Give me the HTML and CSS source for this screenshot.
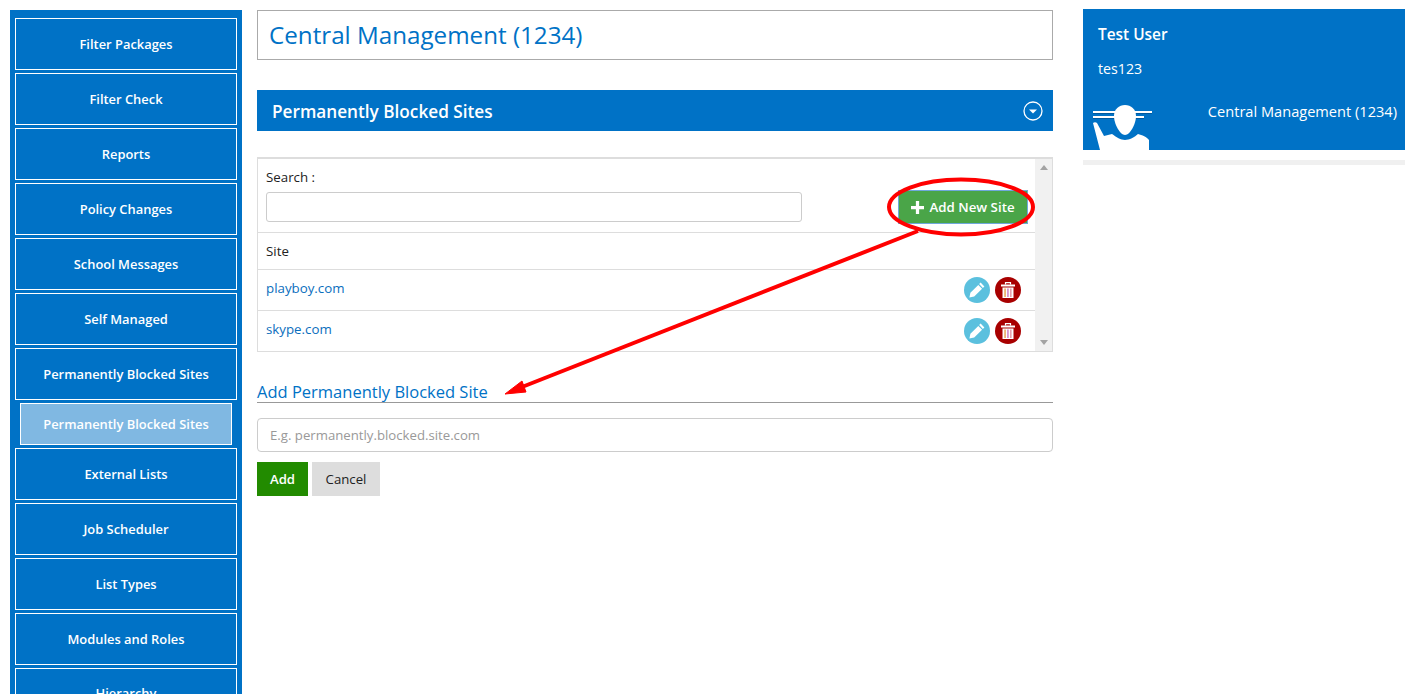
FILE: index.html
```html
<!DOCTYPE html>
<html lang="en">
<head>
    <meta charset="UTF-8">
    <meta name="viewport" content="width=device-width, initial-scale=1.0">
    <title>Permanently Blocked Sites</title>
    <link rel="stylesheet" href="styles.css">
</head>
<body>
    <div class="page">
        <nav class="sidebar">
            <a class="nav-item">Filter Packages</a>
            <a class="nav-item">Filter Check</a>
            <a class="nav-item">Reports</a>
            <a class="nav-item">Policy Changes</a>
            <a class="nav-item">School Messages</a>
            <a class="nav-item">Self Managed</a>
            <a class="nav-item">Permanently Blocked Sites</a>
            <a class="nav-sub">Permanently Blocked Sites</a>
            <a class="nav-item">External Lists</a>
            <a class="nav-item">Job Scheduler</a>
            <a class="nav-item">List Types</a>
            <a class="nav-item">Modules and Roles</a>
            <a class="nav-item nav-cut">Hierarchy</a>
        </nav>

        <main class="content">
            <h1 class="title-box">Central Management (1234)</h1>

            <div class="panel-head">
                <h2>Permanently Blocked Sites</h2>
                <svg class="collapse-icon" width="20" height="20" viewBox="0 0 20 20">
                    <circle cx="10" cy="10" r="9" fill="none" stroke="#fff" stroke-width="1.3"/>
                    <path d="M6 8.5h8l-4 4z" fill="#fff"/>
                </svg>
            </div>

            <div class="table-box">
                <div class="table-main">
                    <div class="search-row">
                        <div class="search-field">
                            <label for="search">Search :</label>
                            <input type="text" id="search">
                        </div>
                        <button class="btn-new">
                            <svg width="13" height="13" viewBox="0 0 12 12"><path d="M4.5 0h3v4.5H12v3H7.5V12h-3V7.5H0v-3h4.5z" fill="#fff"/></svg>
                            Add New Site
                        </button>
                    </div>
                    <div class="table-head">Site</div>
                    <div class="table-row">
                        <a class="site-link">playboy.com</a>
                        <div class="row-actions">
                            <span class="round-btn edit">
                                <svg width="18" height="18" viewBox="0 0 18 18"><path d="M12.6 1.6l3.8 3.8-1.5 1.5-3.8-3.8zM10.3 3.9l3.8 3.8-7.9 7.9-4.8 1 1-4.8z" fill="#fff"/></svg>
                            </span>
                            <span class="round-btn del">
                                <svg width="14" height="16" viewBox="0 0 14 16"><path d="M4.5 2.5V.7h5v1.8" fill="none" stroke="#fff" stroke-width="1.2"/><path d="M0 2.5h14v2H0z" fill="#fff"/><path d="M1.5 5.5h11V16h-11z" fill="#fff"/><path d="M3.4 6.5h1.3V15H3.4z" fill="#e49a3a"/><path d="M6.3 6.5h1.3V15H6.3z" fill="#c46fc0"/><path d="M9.2 6.5h1.3V15H9.2z" fill="#e08a9a"/></svg>
                            </span>
                        </div>
                    </div>
                    <div class="table-row last">
                        <a class="site-link">skype.com</a>
                        <div class="row-actions">
                            <span class="round-btn edit">
                                <svg width="18" height="18" viewBox="0 0 18 18"><path d="M12.6 1.6l3.8 3.8-1.5 1.5-3.8-3.8zM10.3 3.9l3.8 3.8-7.9 7.9-4.8 1 1-4.8z" fill="#fff"/></svg>
                            </span>
                            <span class="round-btn del">
                                <svg width="14" height="16" viewBox="0 0 14 16"><path d="M4.5 2.5V.7h5v1.8" fill="none" stroke="#fff" stroke-width="1.2"/><path d="M0 2.5h14v2H0z" fill="#fff"/><path d="M1.5 5.5h11V16h-11z" fill="#fff"/><path d="M3.4 6.5h1.3V15H3.4z" fill="#e49a3a"/><path d="M6.3 6.5h1.3V15H6.3z" fill="#c46fc0"/><path d="M9.2 6.5h1.3V15H9.2z" fill="#e08a9a"/></svg>
                            </span>
                        </div>
                    </div>
                </div>
                <div class="scroll-track">
                    <span class="arrow-up"></span>
                    <span class="arrow-down"></span>
                </div>
            </div>

            <h3 class="form-title">Add Permanently Blocked Site</h3>
            <input class="form-input" type="text" placeholder="E.g. permanently.blocked.site.com">
            <div class="form-buttons">
                <button class="btn-add">Add</button>
                <button class="btn-cancel">Cancel</button>
            </div>
        </main>

        <aside class="side-right">
            <div class="user-card">
                <div class="user-name">Test User</div>
                <div class="user-login">tes123</div>
                <div class="user-bottom">
                    <svg class="user-icon" width="64" height="46" viewBox="0 0 64 46">
                        <path d="M2 8h59M2 13h51" stroke="#005a9e" stroke-width="2" transform="translate(0 1)"/>
                        <path d="M2 8h59M2 13h51" stroke="#fff" stroke-width="2"/>
                        <path d="M34 1c6 0 11 4 11 11 0 8-6 19-11 19s-11-11-11-19c0-7 5-11 11-11z" fill="#fff"/>
                        <path d="M2 19c1-1 3-1 4 0l7 13 8-2c4 3 9 6 13 6s10-3 13-6c4 1 9 3 11 6v10H9z" fill="#fff"/>
                    </svg>
                    <div class="user-org">Central Management (1234)</div>
                </div>
            </div>
            <div class="user-strip"></div>
        </aside>
    </div>

    <!-- red annotation drawn on top of the screenshot -->
    <svg class="annotation" width="1419" height="694" viewBox="0 0 1419 694">
        <ellipse cx="961" cy="207" rx="72" ry="27.5" fill="none" stroke="#f00" stroke-width="4"/>
        <path d="M918 231L522 387" stroke="#f00" stroke-width="4" fill="none"/>
        <path d="M505 394l17-13 4 11z" fill="#f00" stroke="#f00" stroke-width="1"/>
    </svg>
</body>
</html>
```

FILE: styles.css
```css
:root {
    --blue: #0072c6;
    --font-family: "Open Sans", "Noto Sans", Arial, sans-serif;
}

html, body {
    margin: 0;
    height: 100%;
    overflow: hidden;
}

body {
    font-family: var(--font-family);
    background: #fff;
    color: #222;
    font-size: 13.3px;
    position: relative;
}

.page {
    display: flex;
    align-items: flex-start;
    height: 694px;
    overflow: hidden;
}

.sidebar {
    width: 232px;
    flex: none;
    margin: 10px 0 0 10px;
    padding: 8px 5px;
    box-sizing: border-box;
    background: var(--blue);
    display: flex;
    flex-direction: column;
    gap: 3px;
}

.nav-item, .nav-sub {
    display: flex;
    align-items: center;
    justify-content: center;
    flex: none;
    box-sizing: border-box;
    border: 1px solid #fff;
    color: #fff;
    font-size: 12.9px;
    font-weight: 600;
    height: 52px;
}

.nav-sub {
    height: 42px;
    margin: 0 5px;
    background: #80b8e2;
}

/* last item runs past the window, the text is clipped like in the real page */
.nav-cut {
    padding-bottom: 2px;
}

.content {
    width: 796px;
    flex: none;
    margin: 10px 0 0 15px;
}

.title-box {
    margin: 0;
    height: 50px;
    box-sizing: border-box;
    border: 1px solid #aaa;
    padding: 0 0 2px 11px;
    display: flex;
    align-items: center;
    color: var(--blue);
    font-size: 24.2px;
    font-weight: 400;
}

.panel-head {
    margin-top: 30px;
    height: 41px;
    box-sizing: border-box;
    background: var(--blue);
    padding: 0 10px 0 15px;
    display: flex;
    align-items: center;
    justify-content: space-between;
}

.panel-head h2 {
    margin: 0;
    color: #fff;
    font-size: 17.2px;
    font-weight: 600;
    position: relative;
    top: 1px;
}

.table-box {
    margin-top: 26px;
    height: 195px;
    box-sizing: border-box;
    border: 1px solid #ddd;
    border-top-width: 2px;
    display: flex;
}

.table-main {
    flex: 1;
}

.search-row {
    height: 74px;
    box-sizing: border-box;
    border-bottom: 1px solid #ddd;
    padding: 9px 7px 0 8px;
    display: flex;
    justify-content: space-between;
}

.search-field label {
    display: block;
    line-height: 18px;
    margin-bottom: 6px;
}

.search-field input {
    display: block;
    width: 536px;
    height: 30px;
    box-sizing: border-box;
    border: 1px solid #ccc;
    border-radius: 3px;
}

.btn-new {
    align-self: flex-start;
    margin-top: 22px;
    width: 130px;
    height: 34px;
    box-sizing: border-box;
    background: #4aa548;
    border: 1px solid #6fa8dc;
    color: #fff;
    font-family: inherit;
    font-size: 13.3px;
    font-weight: 600;
    display: flex;
    align-items: center;
    justify-content: center;
    gap: 5px;
    padding: 0;
}

.table-head {
    height: 37px;
    box-sizing: border-box;
    border-bottom: 1px solid #ddd;
    padding-left: 8px;
    display: flex;
    align-items: center;
}

.table-row {
    height: 41px;
    box-sizing: border-box;
    border-bottom: 1px solid #ddd;
    padding: 0 14px 0 8px;
    display: flex;
    align-items: center;
    justify-content: space-between;
}

.table-row.last {
    border-bottom: none;
    padding-bottom: 1px;
}

.site-link {
    color: #0a6ebd;
    position: relative;
    top: -2px;
}

.row-actions {
    display: flex;
    gap: 5px;
}

.round-btn {
    width: 26px;
    height: 26px;
    border-radius: 50%;
    display: flex;
    align-items: center;
    justify-content: center;
}

.round-btn.edit {
    background: #5bc0de;
}

.round-btn.del {
    background: #a80000;
}

.scroll-track {
    width: 17px;
    flex: none;
    background: #f1f1f1;
    display: flex;
    flex-direction: column;
    justify-content: space-between;
    align-items: center;
    padding: 6px 0;
    box-sizing: border-box;
}

.arrow-up {
    border: 4px solid transparent;
    border-top: none;
    border-bottom: 5px solid #a3a3a3;
}

.arrow-down {
    border: 4px solid transparent;
    border-bottom: none;
    border-top: 5px solid #a3a3a3;
}

.form-title {
    margin: 27px 0 0;
    height: 23px;
    border-bottom: 1px solid #999;
    color: var(--blue);
    font-size: 16.5px;
    font-weight: 400;
    line-height: 25px;
}

.form-input {
    display: block;
    width: 100%;
    height: 34px;
    margin-top: 15px;
    box-sizing: border-box;
    border: 1px solid #ccc;
    border-radius: 4px;
    padding: 0 12px;
    font-family: inherit;
    font-size: 13.2px;
}

.form-input::placeholder {
    color: #999;
}

.form-buttons {
    display: flex;
    gap: 4px;
    margin-top: 10px;
}

.form-buttons button {
    height: 34px;
    border: none;
    padding: 0;
    font-family: inherit;
    font-size: 13.2px;
}

.btn-add {
    width: 51px;
    background: #228b00;
    color: #fff;
    font-weight: 600;
}

.btn-cancel {
    width: 68px;
    background: #ddd;
    color: #222;
}

.side-right {
    width: 322px;
    flex: none;
    margin: 9px 0 0 30px;
}

.user-card {
    height: 141px;
    box-sizing: border-box;
    background: var(--blue);
    color: #fff;
    padding-top: 15px;
    display: flex;
    flex-direction: column;
}

.user-name {
    margin-left: 15px;
    font-size: 15.4px;
    font-weight: 600;
    line-height: 22px;
}

.user-login {
    margin: 13px 0 0 15px;
    font-size: 14.2px;
    line-height: 20px;
}

.user-bottom {
    margin-top: auto;
    display: flex;
    align-items: flex-start;
    justify-content: space-between;
    padding: 0 8px;
}

.user-icon {
    display: block;
}

.user-org {
    font-size: 14.6px;
    line-height: 20px;
    margin-top: -3px;
}

.user-strip {
    height: 5px;
    margin-top: 10px;
    background: #f0f0f0;
}

.annotation {
    position: absolute;
    left: 0;
    top: 0;
    pointer-events: none;
}
```
